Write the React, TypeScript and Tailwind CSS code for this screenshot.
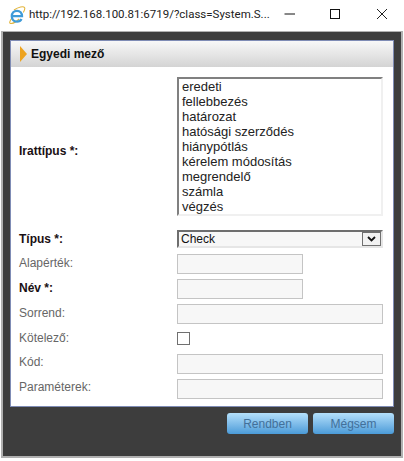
import React from 'react';

const doctypes = [
  'eredeti',
  'fellebbezés',
  'határozat',
  'hatósági szerződés',
  'hiánypótlás',
  'kérelem módosítás',
  'megrendelő',
  'számla',
  'végzés',
];

const Input = ({ short }: { short?: boolean }) => (
  <div className={`h-[20px] border border-[#c4c4c4] bg-[#f7f7f7] ${short ? 'w-[126px]' : 'w-[206px]'}`} />
);

const Row = ({ label, bold, nudge, children }: { label: string; bold?: boolean; nudge?: string; children: React.ReactNode }) => (
  <div className="flex items-center h-[25px]">
    <div className={`w-[166px] pl-[8px] text-[12px] ${nudge ?? 'pb-[1px]'} ${bold ? 'font-bold text-[#1a1014]' : 'text-[#666666]'}`}>{label}</div>
    {children}
  </div>
);

export default function App() {
  return (
    <div className="w-[404px] h-[461px] bg-white overflow-hidden font-['Liberation_Sans',Arial,sans-serif]">
      {/* window title bar */}
      <div className="h-[31px] flex items-center">
        <svg width="18" height="18" viewBox="0 0 18 18" className="ml-[8px] mt-[-2px]">
          <path d="M3.500 12.500C1.500 15.500 1 17.500 3 17.500c2.500 0 5.500-2 8-4.500M6 4C10.500 1 15.500 0 16.500 1.500c.8 1.200 0 3-1.200 5" fill="none" stroke="#e3b53c" strokeWidth="1.100" />
          <path d="M4.800 10.200h9.200c0-3.200-2-5.400-5-5.400s-5.200 2.400-5.200 5.500 2.200 5.400 5.200 5.400c2.100 0 3.700-1 4.500-2.600" fill="none" stroke="#3f9bd8" strokeWidth="2.300" />
        </svg>
        <span className="ml-[3px] w-[249px] text-[11.5px] text-[#222222] mt-[-1px] whitespace-nowrap font-['Roboto',sans-serif]">
          http://192.168.100.81:6719/?class=System.S...
        </span>
        <svg width="12" height="12" viewBox="0 0 12 12" className="ml-[6px] mt-[-3px]">
          <path d="M0.500 6h10.500" stroke="#111111" strokeWidth="1" />
        </svg>
        <svg width="12" height="12" viewBox="0 0 12 12" className="ml-[33px] mt-[-3px]">
          <rect x="1.500" y="1.500" width="9" height="9" fill="none" stroke="#111111" strokeWidth="1" />
        </svg>
        <svg width="12" height="12" viewBox="0 0 12 12" className="ml-[35px] mt-[-3px]">
          <path d="M1 1l10 10M11 1L1 11" stroke="#222222" strokeWidth="1" />
        </svg>
      </div>

      {/* dialog frame */}
      <div className="h-[427px] ml-[1px] w-[402px] border-2 border-t-[1px] border-[#b0b0b0] bg-[#3d3d3d] pt-[8px] pl-[7px]">
        <div className="w-[384px] h-[367px] border border-[#7f8cb5] bg-white">
          <div className="h-[26px] flex items-center bg-gradient-to-b from-[#f8f8f8] to-[#d4d4d4]">
            <div className="ml-[9px] w-0 h-0 border-y-[8px] border-y-transparent border-l-[7px] border-l-[#eda31f]" />
            <span className="ml-[4px] text-[12px] font-bold text-[#111111]">Egyedi mező</span>
          </div>

          <div className="pt-[10px] flex flex-col">
            <div className="flex items-center h-[139px]">
              <div className="w-[166px] pl-[8px] pt-[8px] text-[12px] font-bold text-[#1a1014]">Irattípus *:</div>
              <div className="w-[206px] h-[139px] border-2 border-[#f0f0f0] border-t-[#808080] border-l-[#808080] bg-white pl-[3px] text-[13px] leading-[15px] text-[#222222]">
                {doctypes.map(d => (
                  <div key={d}>{d}</div>
                ))}
              </div>
            </div>

            <div className="h-[14px]" />
            <div className="flex items-center h-[18px]">
              <div className="w-[166px] pl-[8px] text-[12px] font-bold text-[#1a1014]">Típus *:</div>
              <div className="w-[206px] h-[18px] border-2 border-[#e6e6e6] border-t-[#6e6e6e] border-l-[#6e6e6e] bg-[#f7f7f7] flex items-center justify-between pl-[2px] text-[12px] text-[#111111]">
                <span>Check</span>
                <div className="w-[19px] h-[14px] border border-[#707070] bg-[#f2f2f2] flex items-center justify-center">
                  <svg width="9" height="6" viewBox="0 0 9 6">
                    <path d="M1 1l3.500 3.500L8 1" fill="none" stroke="#111111" strokeWidth="1.800" />
                  </svg>
                </div>
              </div>
            </div>

            <div className="flex flex-col mt-[3px]">
              <Row label="Alapérték:"><Input short /></Row>
              <Row label="Név *:" bold><Input short /></Row>
              <Row label="Sorrend:"><Input /></Row>
              <Row label="Kötelező:">
                <div className="w-[13px] h-[13px] border border-[#707070] bg-white" />
              </Row>
              <Row label="Kód:" nudge="pb-[3px]"><Input /></Row>
              <Row label="Paraméterek:" nudge="pb-[3px]"><Input /></Row>
            </div>
          </div>
        </div>

        <div className="flex justify-end gap-[5px] w-[384px] mt-[6px]">
          {['Rendben', 'Mégsem'].map(b => (
            <div
              key={b}
              className="w-[81px] h-[21px] rounded-[3px] bg-gradient-to-b from-[#b4e0fb] to-[#4a9bd8] flex items-center justify-center text-[12px] text-[#42709a]"
            >
              {b}
            </div>
          ))}
        </div>
      </div>
    </div>
  );
}
